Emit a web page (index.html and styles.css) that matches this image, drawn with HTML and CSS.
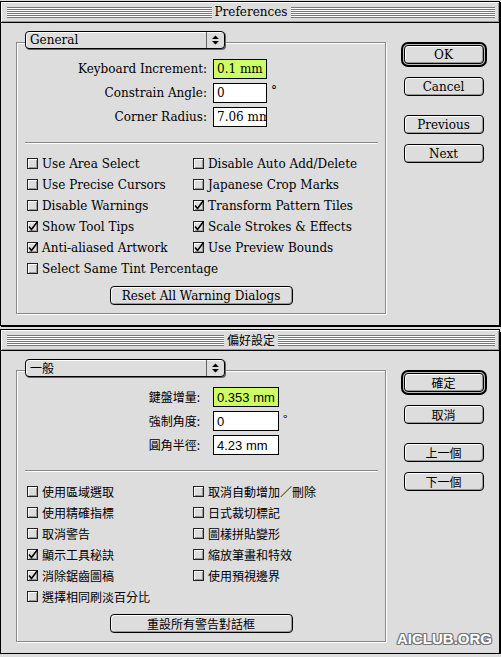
FILE: index.html
```html
<!DOCTYPE html>
<html lang="en">

<head>
  <meta charset="UTF-8">
  <meta name="viewport" content="width=device-width, initial-scale=1">
  <title>Preferences</title>
  <link rel="stylesheet" href="styles.css">
</head>

<body>

  <div class="window">
    <div class="titlebar">
      <span class="stripes"></span>
      <span class="title">Preferences</span>
      <span class="stripes"></span>
    </div>
    <div class="dialog-body">
      <div class="panel">
        <div class="popup">
          <span class="popup-label">General</span>
          <span class="popup-arrows">
            <svg width="17" height="16" viewBox="0 0 17 16"><path d="M5 7h7L8.5 3.5z M5 9h7L8.5 12.5z" fill="#000"/></svg>
          </span>
        </div>
        <div class="fields">
          <div class="field">
            <label>Keyboard Increment:</label>
            <input class="num focus" type="text" value="0.1 mm" readonly>
          </div>
          <div class="field">
            <label>Constrain Angle:</label>
            <input class="num" type="text" value="0" readonly>
            <span class="unit">°</span>
          </div>
          <div class="field">
            <label>Corner Radius:</label>
            <input class="num" type="text" value="7.06 mm" readonly>
          </div>
        </div>
        <div class="separator"></div>
        <div class="checks">
          <div class="check"><span class="box"></span>Use Area Select</div>
          <div class="check"><span class="box"></span>Use Precise Cursors</div>
          <div class="check"><span class="box"></span>Disable Warnings</div>
          <div class="check"><span class="box on"><svg viewBox="0 0 11 11"><path d="M2 5.5 4.5 8.5 10.5 0.5"/></svg></span>Show Tool Tips</div>
          <div class="check"><span class="box on"><svg viewBox="0 0 11 11"><path d="M2 5.5 4.5 8.5 10.5 0.5"/></svg></span>Anti-aliased Artwork</div>
          <div class="check"><span class="box"></span>Select Same Tint Percentage</div>
          <div class="check"><span class="box"></span>Disable Auto Add/Delete</div>
          <div class="check"><span class="box"></span>Japanese Crop Marks</div>
          <div class="check"><span class="box on"><svg viewBox="0 0 11 11"><path d="M2 5.5 4.5 8.5 10.5 0.5"/></svg></span>Transform Pattern Tiles</div>
          <div class="check"><span class="box on"><svg viewBox="0 0 11 11"><path d="M2 5.5 4.5 8.5 10.5 0.5"/></svg></span>Scale Strokes &amp; Effects</div>
          <div class="check"><span class="box on"><svg viewBox="0 0 11 11"><path d="M2 5.5 4.5 8.5 10.5 0.5"/></svg></span>Use Preview Bounds</div>
        </div>
        <div class="reset-row">
          <button class="btn reset">Reset All Warning Dialogs</button>
        </div>
      </div>
      <div class="actions">
        <div class="default-ring"><button class="btn">OK</button></div>
        <button class="btn cancel">Cancel</button>
        <button class="btn prev">Previous</button>
        <button class="btn next">Next</button>
      </div>
    </div>
  </div>

  <div class="window zh" lang="zh-Hant">
    <div class="titlebar">
      <span class="stripes"></span>
      <span class="title">偏好設定</span>
      <span class="stripes"></span>
    </div>
    <div class="dialog-body">
      <div class="panel">
        <div class="popup">
          <span class="popup-label">一般</span>
          <span class="popup-arrows">
            <svg width="17" height="16" viewBox="0 0 17 16"><path d="M5 7h7L8.5 3.5z M5 9h7L8.5 12.5z" fill="#000"/></svg>
          </span>
        </div>
        <div class="fields">
          <div class="field">
            <label>鍵盤增量:</label>
            <input class="num focus" type="text" value="0.353 mm" readonly>
          </div>
          <div class="field">
            <label>強制角度:</label>
            <input class="num" type="text" value="0" readonly>
            <span class="unit">°</span>
          </div>
          <div class="field">
            <label>圓角半徑:</label>
            <input class="num" type="text" value="4.23 mm" readonly>
          </div>
        </div>
        <div class="separator"></div>
        <div class="checks">
          <div class="check"><span class="box"></span>使用區域選取</div>
          <div class="check"><span class="box"></span>使用精確指標</div>
          <div class="check"><span class="box"></span>取消警告</div>
          <div class="check"><span class="box on"><svg viewBox="0 0 11 11"><path d="M2 5.5 4.5 8.5 10.5 0.5"/></svg></span>顯示工具秘訣</div>
          <div class="check"><span class="box on"><svg viewBox="0 0 11 11"><path d="M2 5.5 4.5 8.5 10.5 0.5"/></svg></span>消除鋸齒圖稿</div>
          <div class="check"><span class="box"></span>選擇相同刷淡百分比</div>
          <div class="check"><span class="box"></span>取消自動增加／刪除</div>
          <div class="check"><span class="box"></span>日式裁切標記</div>
          <div class="check"><span class="box"></span>圖樣拼貼變形</div>
          <div class="check"><span class="box"></span>縮放筆畫和特效</div>
          <div class="check"><span class="box"></span>使用預視邊界</div>
        </div>
        <div class="reset-row">
          <button class="btn reset">重設所有警告對話框</button>
        </div>
      </div>
      <div class="actions">
        <div class="default-ring"><button class="btn">確定</button></div>
        <button class="btn cancel">取消</button>
        <button class="btn prev">上一個</button>
        <button class="btn next">下一個</button>
      </div>
    </div>
    <span class="watermark">AICLUB.ORG</span>
  </div>

</body>

</html>
```

FILE: styles.css
```css
html {
  background: #DDD;
}

body {
  color: #000;
  font-family: "DejaVu Serif", serif;
  font-size: 12px;
  line-height: 16px;
  margin: 0;
}

.window {
  background: #DDD;
  border: 1px solid #000;
  box-shadow: 1px 1px 0 #000;
  margin-top: 1px;
  position: relative;
  width: 498px;
}

.window + .window {
  box-shadow: 1px 3px 0 #000;
  margin-top: 3px;
}

.zh {
  font-family: "Noto Sans CJK TC", sans-serif;
}

/* title bar */

.titlebar {
  align-items: center;
  border-bottom: 1px solid #000;
  box-shadow: inset 1px 1px 0 #FFF, inset -1px -1px 0 #999;
  display: flex;
  height: 20px;
  padding: 0 4px 0 6px;
}

.stripes {
  background: repeating-linear-gradient(to bottom, #777 0 1px, #FFF 1px 2px);
  flex: 1;
  height: 11px;
}

.title {
  padding: 0 3px 0 3px;
}

/* body */

.dialog-body {
  display: flex;
  padding: 19px 0 11px 15px;
}

.panel {
  border: 1px solid #888;
  box-shadow: 1px 1px 0 #FFF, inset 1px 1px 0 #FFF;
  box-sizing: border-box;
  height: 272px;
  padding-bottom: 8px;
  width: 370px;
}

.popup {
  background: #DDD;
  border: 1px solid #000;
  border-radius: 4px;
  box-shadow: 1px 1px 0 #666, inset 1px 1px 0 #FFF;
  box-sizing: border-box;
  display: flex;
  height: 18px;
  margin: -12px 0 0 8px;
  width: 200px;
}

.popup-label {
  flex: 1;
  line-height: 16px;
  padding-left: 4px;
}

.popup-arrows {
  border-left: 1px solid #666;
  display: flex;
  width: 17px;
}

.fields {
  margin-top: 10px;
}

.field {
  align-items: flex-start;
  display: flex;
  height: 20px;
  margin-bottom: 4px;
}

.field:last-child {
  margin-bottom: 0;
}

.field label {
  line-height: 20px;
  margin-right: 6px;
  text-align: right;
  width: 190px;
}

.zh .field label {
  box-sizing: border-box;
  padding-right: 7px;
}

.num {
  background: #FFF;
  border: 1px solid #000;
  box-sizing: border-box;
  color: #000;
  font-family: inherit;
  font-size: inherit;
  height: 20px;
  margin: 0;
  outline: none;
  padding: 0 0 0 3px;
  width: 54px;
}

.zh .num {
  font-family: "Liberation Sans", sans-serif;
  font-size: 13px;
  width: 66px;
}

.num.focus {
  background: #CCFF66;
}

.unit {
  line-height: 10px;
  margin: 3px 0 0 4px;
}

.separator {
  border-top: 1px solid #888;
  border-bottom: 1px solid #FFF;
  margin: 15px 7px 0 8px;
}

.checks {
  display: grid;
  grid-auto-flow: column;
  grid-template-columns: 166px auto;
  grid-template-rows: repeat(6, 21px);
  margin-top: 9px;
  padding-left: 10px;
}

.check {
  align-items: center;
  display: flex;
  white-space: nowrap;
}

.box {
  background: #DDD;
  border: 1px solid #222;
  box-shadow: inset 1px 1px 0 #FFF, inset -1px -1px 0 #999;
  box-sizing: border-box;
  flex-shrink: 0;
  height: 11px;
  margin-right: 4px;
  position: relative;
  width: 11px;
}

.box svg {
  fill: none;
  height: 11px;
  left: -1px;
  overflow: visible;
  position: absolute;
  stroke: #000;
  stroke-width: 1.6;
  top: -1px;
  width: 11px;
}

.reset-row {
  display: flex;
  justify-content: center;
  margin-top: 7px;
}

/* buttons */

.btn {
  background: #DDD;
  border: 1px solid #000;
  border-radius: 4px;
  box-shadow: inset 1px 1px 0 #FFF, inset -1px -1px 0 #999;
  color: #000;
  font-family: inherit;
  font-size: inherit;
  height: 19px;
  line-height: 16px;
  margin: 0;
  padding: 0;
  width: 80px;
}

.reset {
  width: 183px;
}

.actions {
  align-items: center;
  display: flex;
  flex: 1;
  flex-direction: column;
  padding-left: 2px;
}

.default-ring {
  background: #BBB;
  border: 2px solid #000;
  border-radius: 7px;
  display: flex;
  padding: 1px;
}

.cancel {
  margin-top: 10px;
}

.prev {
  margin-top: 19px;
}

.next {
  margin-top: 10px;
}

.watermark {
  bottom: 7px;
  color: #FFF;
  font-family: "Liberation Sans", sans-serif;
  font-size: 15px;
  font-weight: bold;
  line-height: 15px;
  position: absolute;
  right: 7px;
  text-shadow: 1px 0 0 #777, -1px 0 0 #777, 0 1px 0 #777, 0 -1px 0 #777, 1px 1px 0 #777, -1px -1px 0 #777, 1px -1px 0 #777, -1px 1px 0 #777;
}
```
